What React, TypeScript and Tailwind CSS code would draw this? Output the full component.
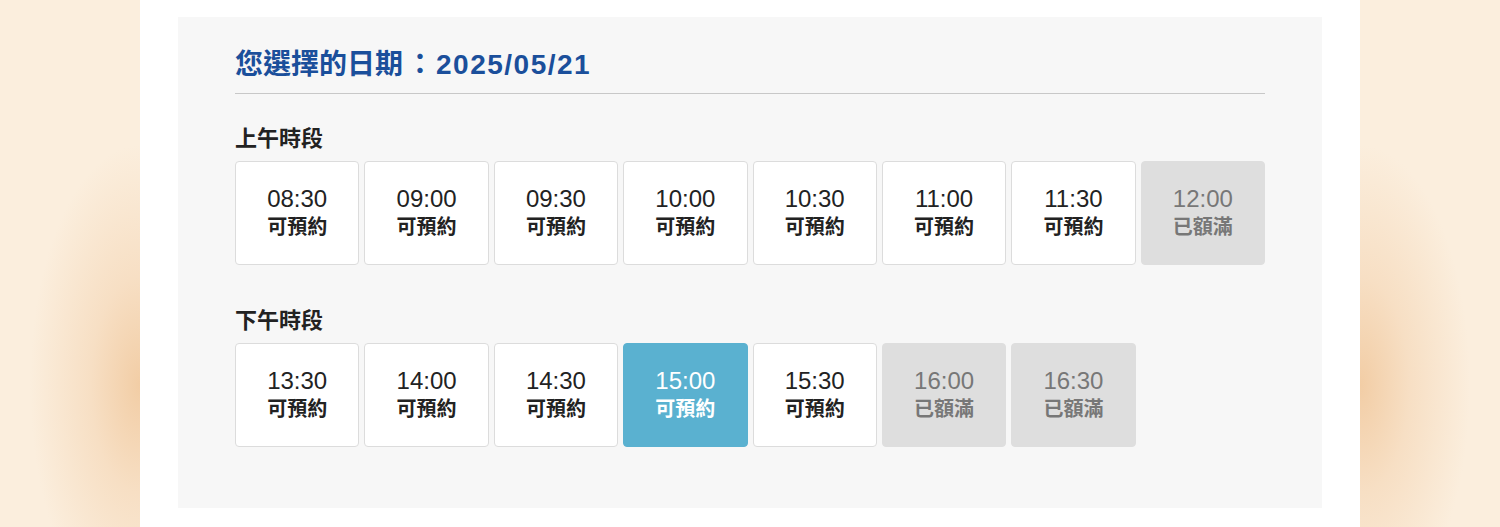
import React from "react";

type Slot = { time: string; status: "open" | "full" | "selected" };

const morning: Slot[] = [
  { time: "08:30", status: "open" },
  { time: "09:00", status: "open" },
  { time: "09:30", status: "open" },
  { time: "10:00", status: "open" },
  { time: "10:30", status: "open" },
  { time: "11:00", status: "open" },
  { time: "11:30", status: "open" },
  { time: "12:00", status: "full" },
];

const afternoon: Slot[] = [
  { time: "13:30", status: "open" },
  { time: "14:00", status: "open" },
  { time: "14:30", status: "open" },
  { time: "15:00", status: "selected" },
  { time: "15:30", status: "open" },
  { time: "16:00", status: "full" },
  { time: "16:30", status: "full" },
];

const font = "font-['Liberation_Sans','Noto_Sans_CJK_TC',sans-serif]";

function SlotCard({ slot }: { slot: Slot }) {
  const styles = {
    open: "bg-white border-[#dcdcdc] text-[#222]",
    full: "bg-[#dedede] border-[#dedede] text-[#777]",
    selected: "bg-[#5ab1d0] border-[#5ab1d0] text-white",
  }[slot.status];

  return (
    <div
      className={`flex h-[104px] flex-col items-center justify-center rounded-[4px] border ${styles}`}
    >
      <span className="text-[24px] leading-[28px]">{slot.time}</span>
      <span className="text-[20px] font-bold leading-[28px]">
        {slot.status === "full" ? "已額滿" : "可預約"}
      </span>
    </div>
  );
}

function Section({ title, slots, className }: { title: string; slots: Slot[]; className?: string }) {
  return (
    <div className={className}>
      <h3 className="mb-[9px] text-[22px] font-bold leading-[26px] text-[#222]">{title}</h3>
      <div className="grid grid-cols-8 gap-[5px]">
        {slots.map((s) => (
          <SlotCard key={s.time} slot={s} />
        ))}
      </div>
    </div>
  );
}

export default function App() {
  return (
    <div
      className={`flex min-h-[527px] justify-center bg-[#fbeedd] bg-[radial-gradient(ellipse_110px_240px_at_140px_385px,#f2cda5_0%,#f7dfc4_45%,rgba(251,238,221,0)_100%),radial-gradient(ellipse_110px_240px_at_1360px_385px,#f2cda5_0%,#f7dfc4_45%,rgba(251,238,221,0)_100%)] ${font}`}
    >
      <div className="w-[1220px] bg-white px-[38px] pb-[20px] pt-[17px]">
        <div className="bg-[#f7f7f7] px-[57px] pb-[61px] pt-[30px]">
          <h2 className="border-b border-[#c8c8c8] pb-[10px] text-[28px] font-bold leading-[36px] text-[#1b4f9b]">
            您選擇的日期<span className="ml-[3px]">：</span>
            <span className="ml-[2px] tracking-[1.5px]">2025/05/21</span>
          </h2>
          <Section title="上午時段" slots={morning} className="mt-[32px]" />
          <Section title="下午時段" slots={afternoon} className="mt-[43px]" />
        </div>
      </div>
    </div>
  );
}
